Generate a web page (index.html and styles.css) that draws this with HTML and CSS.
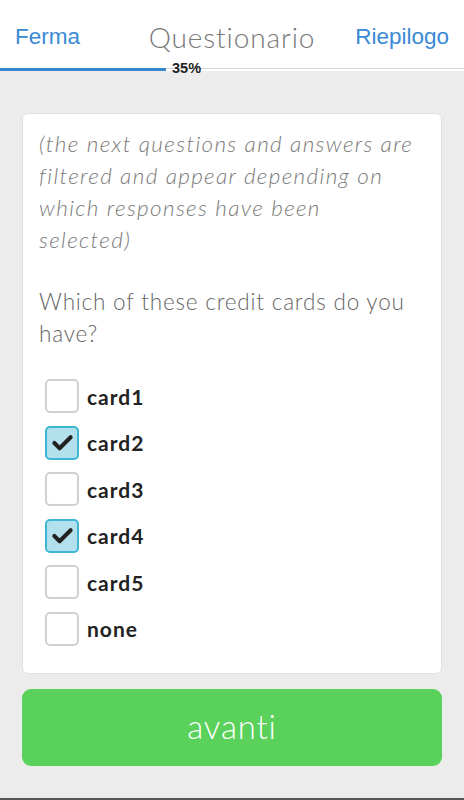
FILE: index.html
```html
<!DOCTYPE html>
<html>
<head>
<meta charset="utf-8">
<link rel="stylesheet" href="styles.css">
</head>
<body>
<div class="page">
  <header class="topbar">
    <a class="nav-link left">Ferma</a>
    <h1 class="title">Questionario</h1>
    <a class="nav-link right">Riepilogo</a>
  </header>
  <div class="progress">
    <div class="progress-fill" style="width:166px"></div>
    <span class="progress-label">35%</span>
  </div>
  <main class="content">
    <section class="card">
      <p class="note">(the next questions and answers are<br>filtered and appear depending on<br>which responses have been<br>selected)</p>
      <p class="question">Which of these credit cards do you have?</p>
      <ul class="options">
        <li class="option"><span class="box"></span><span class="label">card1</span></li>
        <li class="option"><span class="box checked"><svg viewBox="0 0 24 24" width="23" height="23"><path d="M3.5 12.5 L9 18 L20.5 6.5" fill="none" stroke="#222" stroke-width="4.2" stroke-linecap="round" stroke-linejoin="round"/></svg></span><span class="label">card2</span></li>
        <li class="option"><span class="box"></span><span class="label">card3</span></li>
        <li class="option"><span class="box checked"><svg viewBox="0 0 24 24" width="23" height="23"><path d="M3.5 12.5 L9 18 L20.5 6.5" fill="none" stroke="#222" stroke-width="4.2" stroke-linecap="round" stroke-linejoin="round"/></svg></span><span class="label">card4</span></li>
        <li class="option"><span class="box"></span><span class="label">card5</span></li>
        <li class="option"><span class="box"></span><span class="label">none</span></li>
      </ul>
    </section>
    <button class="next">avanti</button>
  </main>
</div>
</body>
</html>
```
FILE: styles.css
```css
* { box-sizing: border-box; }
html, body { margin: 0; padding: 0; }
body {
  background: #ececec;
  font-family: Lato, "Open Sans", sans-serif;
  width: 464px;
  height: 800px;
  overflow: hidden;
}
.page {
  height: 800px;
  display: flex;
  flex-direction: column;
  border-bottom: 2px solid #555;
}
.topbar {
  background: #fff;
  height: 68px;
  display: grid;
  grid-template-columns: 1fr auto 1fr;
  align-items: center;
  padding: 6px 15px 0 15px;
}
.nav-link {
  font-family: "Liberation Sans", Arial, sans-serif;
  font-size: 22.5px;
  color: #3a8ad6;
}
.nav-link.right { justify-self: end; }
.title {
  margin: 0;
  font-family: Lato, sans-serif;
  font-weight: 300;
  font-size: 28px;
  color: #777;
  letter-spacing: 0.9px;
}
.progress {
  position: relative;
  height: 3px;
  background: #fff;
  border-top: 1px solid #d6d6d6;
  display: flex;
}
.progress-fill {
  height: 3px;
  margin-top: -1px;
  background: #3a86cc;
}
.progress-label {
  position: absolute;
  left: 172px;
  top: -8px;
  font-family: "Liberation Sans", Arial, sans-serif;
  font-weight: bold;
  font-size: 14.5px;
  color: #222;
  line-height: 14px;
}
.content {
  flex: 1;
  padding: 42px 22px 0 22px;
  display: flex;
  flex-direction: column;
  gap: 15px;
}
.card {
  background: #fff;
  border: 1px solid #e2e2e2;
  border-radius: 6px;
  padding: 14px 16px 14px 16px;
  height: 561px;
}
.note {
  margin: 0;
  font-style: italic;
  font-weight: 300;
  font-size: 22.5px;
  letter-spacing: 1.35px;
  line-height: 32px;
  color: #7a7a7a;
  white-space: nowrap;
}
.question {
  margin: 30px 0 0;
  font-weight: 300;
  font-size: 22.5px;
  letter-spacing: 0.8px;
  line-height: 32px;
  color: #666;
}
.options {
  list-style: none;
  margin: 29px 0 0;
  padding: 0 0 0 6px;
  display: flex;
  flex-direction: column;
  gap: 12.6px;
}
.option {
  display: flex;
  align-items: center;
  gap: 8px;
  height: 34px;
}
.box {
  width: 34px;
  height: 34px;
  border: 2px solid #d0d0d0;
  border-radius: 5px;
  background: #fff;
  display: flex;
  align-items: center;
  justify-content: center;
}
.box.checked {
  background: #b3e0ed;
  border-color: #3cb6d3;
}
.label {
  font-weight: bold;
  font-size: 21px;
  letter-spacing: 1px;
  color: #222;
}
.next {
  height: 77px;
  border: none;
  border-radius: 9px;
  background: #5ad15a;
  color: #fff;
  font-family: Lato, sans-serif;
  font-weight: 300;
  font-size: 33px;
  letter-spacing: 0.8px;
  padding: 0 0 4px;
}
```
